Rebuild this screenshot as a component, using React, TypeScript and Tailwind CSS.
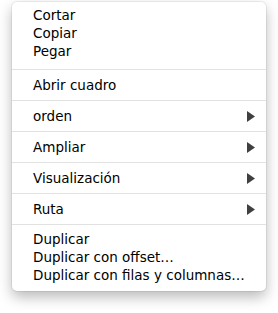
import React from 'react';

const Arrow: React.FC = () => (
  <svg width="8" height="11" viewBox="0 0 8 11" className="shrink-0">
    <path d="M0 0 L8 5.5 L0 11 Z" fill="#404040" />
  </svg>
);

const Row: React.FC<{ label: string; sub?: boolean }> = ({ label, sub }) => (
  <div className="h-[30px] flex items-center justify-between pl-[21px] pr-[11px]">
    <span>{label}</span>
    {sub && <Arrow />}
  </div>
);

const Line: React.FC = () => <div className="h-px bg-[#e2e2e2]" />;

const App: React.FC = () => {
  return (
    <div className="w-[278px] h-[313px] bg-white pt-[2px] pl-[12px]">
      <div
        className="w-[254px] h-[289px] bg-white rounded-[5px] shadow-[0_6px_14px_rgba(0,0,0,0.28),0_0_0_1px_rgba(0,0,0,0.06)] text-[13.5px] text-black leading-[18px]"
        style={{ fontFamily: '"DejaVu Sans", "Noto Sans", sans-serif' }}
      >
        <div className="pt-[4px] pb-[9px] pl-[21px]">
          <div className="h-[18px]">Cortar</div>
          <div className="h-[18px]">Copiar</div>
          <div className="h-[18px]">Pegar</div>
        </div>
        <Line />
        <Row label="Abrir cuadro" />
        <Line />
        <Row label="orden" sub />
        <Line />
        <Row label="Ampliar" sub />
        <Line />
        <Row label="Visualización" sub />
        <Line />
        <Row label="Ruta" sub />
        <Line />
        <div className="pt-[5px] pb-[7px] pl-[21px]">
          <div className="h-[18px]">Duplicar</div>
          <div className="h-[18px]">Duplicar con offset…</div>
          <div className="h-[18px]">Duplicar con filas y columnas…</div>
        </div>
      </div>
    </div>
  );
};

export default App;
